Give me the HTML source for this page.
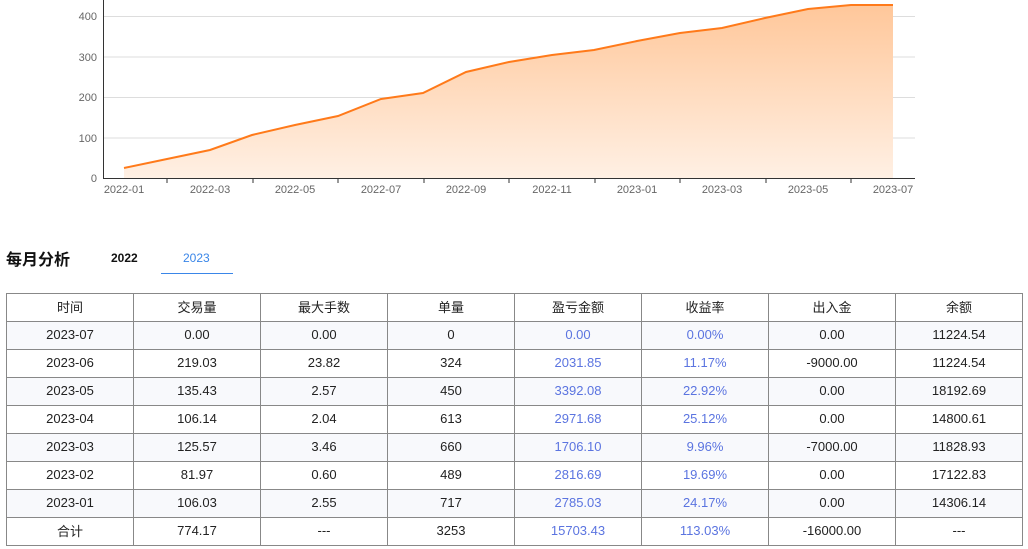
<!DOCTYPE html>
<html><head><meta charset="utf-8"><style>
body{margin:0;width:1028px;height:549px;background:#fff;font-family:"Liberation Sans","Noto Sans CJK SC",sans-serif;position:relative;overflow:hidden}
svg{position:absolute;left:0;top:0}
.t{position:absolute;font-weight:bold}
table{position:absolute;left:6px;top:293px;border-collapse:collapse;width:1017px;table-layout:fixed}
td{border:1px solid #888;height:25px;text-align:center;font-size:13px;color:#222;padding:0 0 2px 0}
tr.a td{background:#f8f9fc}
td.b{color:#5b74e0}
</style></head><body>
<svg width="1028" height="200" font-family="Liberation Sans, sans-serif" font-size="11" fill="#666">
<defs><linearGradient id="g" x1="0" y1="0" x2="0" y2="1"><stop offset="0" stop-color="#ffc79a"/><stop offset="1" stop-color="#fff0e4"/></linearGradient></defs>
<g stroke="#ddd"><line x1="103" x2="915" y1="16.5" y2="16.5"/><line x1="103" x2="915" y1="57" y2="57"/><line x1="103" x2="915" y1="97.5" y2="97.5"/><line x1="103" x2="915" y1="138" y2="138"/></g>
<path d="M124,168 L167,159 L210,150 L252,135 L295,125 L338,116 L381,99 L423,93 L466,72 L509,62 L552,55 L594,50 L637,41 L680,33 L722,28 L765,18 L808,9 L851,5 L893,5 L893,178 L124,178Z" fill="url(#g)"/>
<path d="M124,168 L167,159 L210,150 L252,135 L295,125 L338,116 L381,99 L423,93 L466,72 L509,62 L552,55 L594,50 L637,41 L680,33 L722,28 L765,18 L808,9 L851,5 L893,5" fill="none" stroke="#ff7a1a" stroke-width="2"/>
<g stroke="#333"><line x1="103.5" x2="103.5" y1="0" y2="178"/><line x1="103" x2="915" y1="178.5" y2="178.5"/>
<line x1="167" x2="167" y1="178" y2="183"/><line x1="253" x2="253" y1="178" y2="183"/><line x1="338" x2="338" y1="178" y2="183"/><line x1="424" x2="424" y1="178" y2="183"/><line x1="509" x2="509" y1="178" y2="183"/><line x1="595" x2="595" y1="178" y2="183"/><line x1="680" x2="680" y1="178" y2="183"/><line x1="766" x2="766" y1="178" y2="183"/><line x1="851" x2="851" y1="178" y2="183"/></g>
<g text-anchor="end"><text x="97" y="20">400</text><text x="97" y="61">300</text><text x="97" y="101">200</text><text x="97" y="142">100</text><text x="97" y="182">0</text></g>
<g text-anchor="middle"><text x="124" y="193">2022-01</text><text x="210" y="193">2022-03</text><text x="295" y="193">2022-05</text><text x="381" y="193">2022-07</text><text x="466" y="193">2022-09</text><text x="552" y="193">2022-11</text><text x="637" y="193">2023-01</text><text x="722" y="193">2023-03</text><text x="808" y="193">2023-05</text><text x="893" y="193">2023-07</text></g>
</svg>
<div class="t" style="left:6px;top:246px;font-size:16px;color:#111">每月分析</div>
<div class="t" style="left:111px;top:251px;font-size:12px;color:#111">2022</div>
<div style="position:absolute;left:183px;top:251px;font-size:12px;color:#3a86e8">2023</div>
<div style="position:absolute;left:161px;top:273px;width:72px;height:1px;background:#3a86e8"></div>
<table>
<tr><td>时间</td><td>交易量</td><td>最大手数</td><td>单量</td><td>盈亏金额</td><td>收益率</td><td>出入金</td><td>余额</td></tr>
<tr class="a"><td>2023-07</td><td>0.00</td><td>0.00</td><td>0</td><td class="b">0.00</td><td class="b">0.00%</td><td>0.00</td><td>11224.54</td></tr>
<tr><td>2023-06</td><td>219.03</td><td>23.82</td><td>324</td><td class="b">2031.85</td><td class="b">11.17%</td><td>-9000.00</td><td>11224.54</td></tr>
<tr class="a"><td>2023-05</td><td>135.43</td><td>2.57</td><td>450</td><td class="b">3392.08</td><td class="b">22.92%</td><td>0.00</td><td>18192.69</td></tr>
<tr><td>2023-04</td><td>106.14</td><td>2.04</td><td>613</td><td class="b">2971.68</td><td class="b">25.12%</td><td>0.00</td><td>14800.61</td></tr>
<tr class="a"><td>2023-03</td><td>125.57</td><td>3.46</td><td>660</td><td class="b">1706.10</td><td class="b">9.96%</td><td>-7000.00</td><td>11828.93</td></tr>
<tr><td>2023-02</td><td>81.97</td><td>0.60</td><td>489</td><td class="b">2816.69</td><td class="b">19.69%</td><td>0.00</td><td>17122.83</td></tr>
<tr class="a"><td>2023-01</td><td>106.03</td><td>2.55</td><td>717</td><td class="b">2785.03</td><td class="b">24.17%</td><td>0.00</td><td>14306.14</td></tr>
<tr><td>合计</td><td>774.17</td><td>---</td><td>3253</td><td class="b">15703.43</td><td class="b">113.03%</td><td>-16000.00</td><td>---</td></tr>
</table>
</body></html>
